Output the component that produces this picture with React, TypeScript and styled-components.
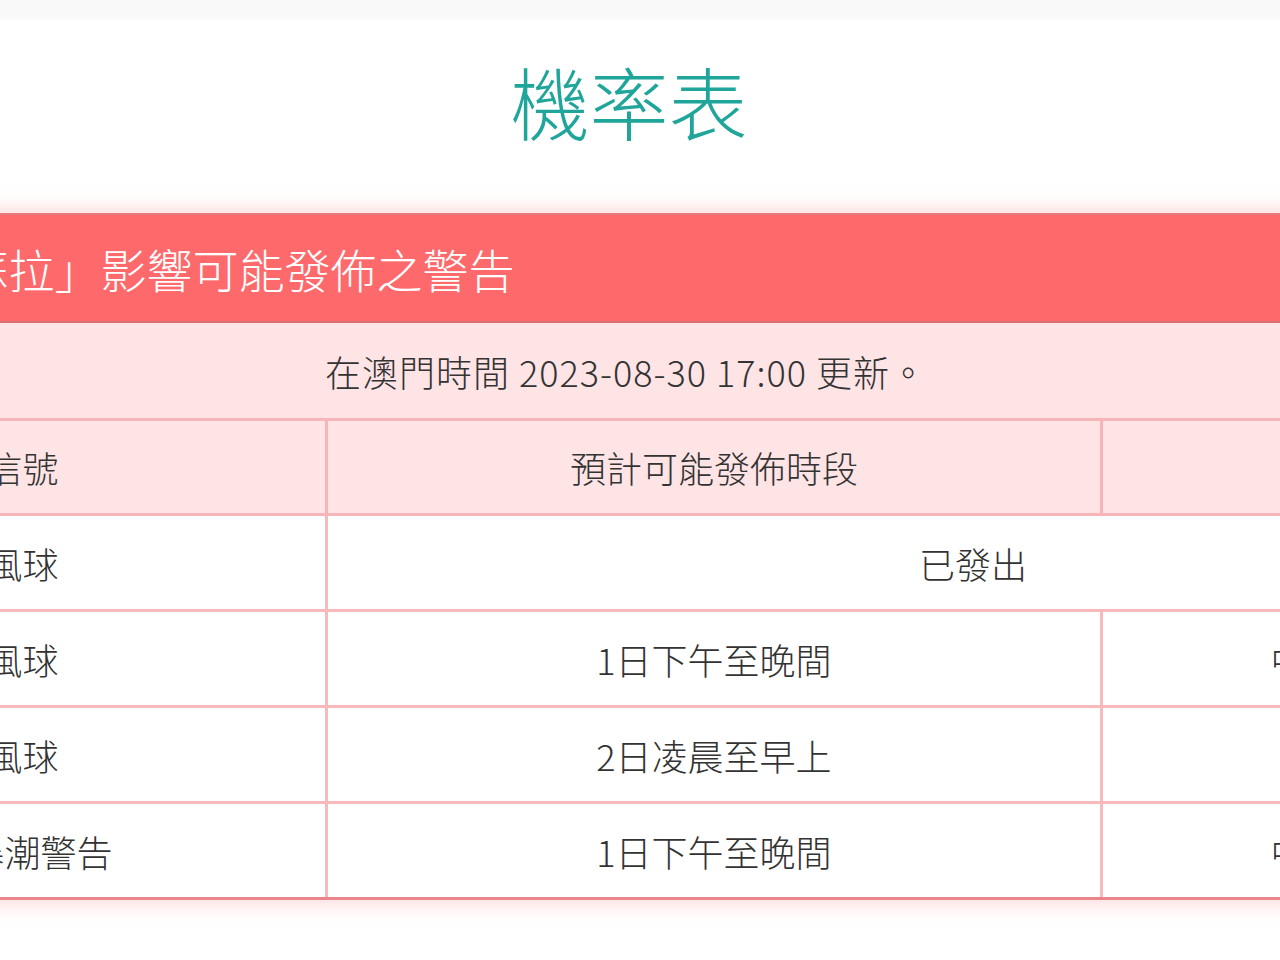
import styled, { createGlobalStyle } from 'styled-components';

type WarningRow = {
  signal: string;
  period: string;
  chance?: string;
  issued?: boolean;
};

const rows: WarningRow[] = [
  { signal: '三號風球', period: '已發出', issued: true },
  { signal: '八號風球', period: '1日下午至晚間', chance: '中等至偏高' },
  { signal: '十號風球', period: '2日凌晨至早上', chance: '低' },
  { signal: '黃色風暴潮警告', period: '1日下午至晚間', chance: '中等至偏高' },
];

const GlobalStyle = createGlobalStyle`
  html, body {
    margin: 0;
    padding: 0;
    background: #ffffff;
    overflow: hidden;
  }

  body {
    font-family: "Noto Sans CJK TC", "Noto Sans", sans-serif;
    color: #333333;
  }
`;

const App = () => {
  return (
    <Page>
      <GlobalStyle />
      <TopBar />
      <Title>機率表</Title>
      <TableViewport>
        <ProbabilityTable>
          <colgroup>
            <col style={{ width: 680 }} />
            <col style={{ width: 775 }} />
            <col style={{ width: 518 }} />
          </colgroup>
          <thead>
            <tr>
              <BannerCell colSpan={3}>受熱帶氣旋「蘇拉」影響可能發佈之警告</BannerCell>
            </tr>
            <tr>
              <UpdateCell colSpan={3}>在澳門時間 2023-08-30 17:00 更新。</UpdateCell>
            </tr>
            <tr>
              <HeadCell>颱風信號</HeadCell>
              <HeadCell>預計可能發佈時段</HeadCell>
              <HeadCell>可能性</HeadCell>
            </tr>
          </thead>
          <tbody>
            {rows.map((row) => (
              <tr key={row.signal}>
                <BodyCell>{row.signal}</BodyCell>
                {row.issued ? (
                  <BodyCell colSpan={2}>{row.period}</BodyCell>
                ) : (
                  <>
                    <BodyCell>{row.period}</BodyCell>
                    <BodyCell>{row.chance}</BodyCell>
                  </>
                )}
              </tr>
            ))}
          </tbody>
        </ProbabilityTable>
      </TableViewport>
    </Page>
  );
};

export default App;

const Page = styled.div`
  width: 1280px;
  min-height: 960px;
  overflow: hidden;
`;

const TopBar = styled.div`
  height: 20px;
  background: linear-gradient(#f9f9f9 80%, #fcfcfc);
`;

const Title = styled.h1`
  margin: 26px 0 0;
  padding-right: 22px;
  text-align: center;
  font-size: 79px;
  font-weight: 300;
  line-height: 110px;
  color: #20a59b;
`;

const TableViewport = styled.div`
  margin-top: 57px;
  padding: 0 0 60px;
`;

const ProbabilityTable = styled.table`
  margin-left: -355px;
  width: 1973px;
  table-layout: fixed;
  border-collapse: collapse;
  box-shadow: 0 0 22px rgba(255, 110, 115, 0.35);

  tbody tr:last-child td {
    border-bottom-color: #e8868b;
  }
`;

const BannerCell = styled.th`
  height: 106px;
  padding: 0 0 0 40px;
  text-align: left;
  font-size: 46px;
  font-weight: 300;
  color: #ffffff;
  background: #fe6a6c;
  border-top: 2px solid #e67a7e;
  border-bottom: 2px solid #d96d72;
  white-space: nowrap;
`;

const UpdateCell = styled.td`
  height: 95px;
  padding: 0 14px 0 0;
  text-align: center;
  font-size: 36px;
  font-weight: 300;
  letter-spacing: 1px;
  color: #333333;
  background: #ffe4e6;
  border-bottom: 3px solid #f7b5b9;
  white-space: nowrap;
`;

const HeadCell = styled.th`
  height: 92px;
  padding: 0;
  text-align: center;
  font-size: 36px;
  font-weight: 300;
  color: #333333;
  background: #ffe4e6;
  border: 3px solid #f7b5b9;
  border-top: none;
  white-space: nowrap;
`;

const BodyCell = styled.td`
  height: 93px;
  padding: 0;
  text-align: center;
  font-size: 36px;
  font-weight: 300;
  color: #333333;
  background: #ffffff;
  border: 3px solid #f7b9bc;
  white-space: nowrap;
`;
